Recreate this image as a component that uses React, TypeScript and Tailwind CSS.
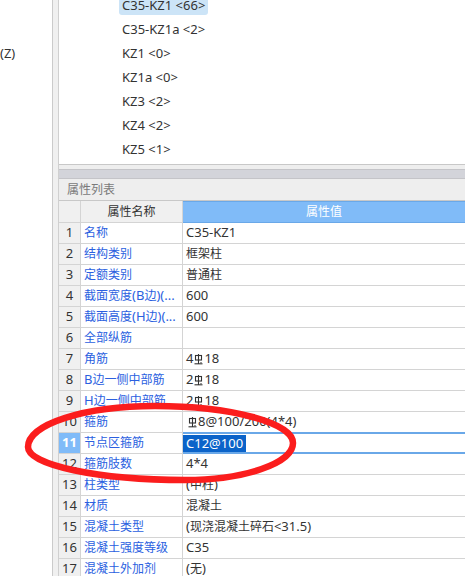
import React from "react";

function Rebar() {
  return (
    <svg width="9" height="11" viewBox="0 0 9 11" className="inline-block mx-[1px] align-[-1px]">
      <rect x="1.5" y="1.5" width="6" height="4.5" fill="none" stroke="#333" strokeWidth="1.1" />
      <line x1="4.5" y1="0" x2="4.5" y2="10" stroke="#333" strokeWidth="1.1" />
      <line x1="0.5" y1="9.8" x2="8.5" y2="9.8" stroke="#333" strokeWidth="1.1" />
      <line x1="6.5" y1="8" x2="7.5" y2="9" stroke="#333" strokeWidth="1" />
    </svg>
  );
}

function T({ s }: { s: string }) {
  const parts = s.split(/([\u3400-\u9fff]+|#)/);
  return (
    <>
      {parts.map((p, i) =>
        p === "#" ? (
          <Rebar key={i} />
        ) : /[\u3400-\u9fff]/.test(p) ? (
          <span key={i} className="text-[12px]">
            {p}
          </span>
        ) : (
          <React.Fragment key={i}>{p}</React.Fragment>
        )
      )}
    </>
  );
}

const tree = ["C35-KZ1 <66>", "C35-KZ1a <2>", "KZ1 <0>", "KZ1a <0>", "KZ3 <2>", "KZ4 <2>", "KZ5 <1>"];

const rows: [string, string][] = [
  ["名称", "C35-KZ1"],
  ["结构类别", "框架柱"],
  ["定额类别", "普通柱"],
  ["截面宽度(B边)(...", "600"],
  ["截面高度(H边)(...", "600"],
  ["全部纵筋", ""],
  ["角筋", "4#18"],
  ["B边一侧中部筋", "2#18"],
  ["H边一侧中部筋", "2#18"],
  ["箍筋", "#8@100/200(4*4)"],
  ["节点区箍筋", "C12@100"],
  ["箍筋肢数", "4*4"],
  ["柱类型", "(中柱)"],
  ["材质", "混凝土"],
  ["混凝土类型", "(现浇混凝土碎石<31.5)"],
  ["混凝土强度等级", "C35"],
  ["混凝土外加剂", "(无)"],
];

export default function App() {
  return (
    <div className="relative w-[465px] h-[576px] overflow-hidden bg-white flex font-['Noto_Sans','Noto_Sans_CJK_SC',sans-serif] text-[13px] text-[#333]">
      <div className="w-[53px] shrink-0 border-r border-[#cbcbcb] bg-white">
        <div className="mt-[44px] leading-[18px]">(Z)</div>
      </div>
      <div className="w-[5px] shrink-0 bg-[#f0f0f0]" />
      <div className="flex-1 min-w-0 flex flex-col border-l border-[#d0d0d0]">
        <div className="h-[165px] shrink-0 border-b border-[#c8c8c8] overflow-hidden bg-white">
          <div className="-mt-[7px] pl-[60px]">
            {tree.map((t, i) => (
              <div key={t} className="h-[24px] flex items-center">
                <span
                  className={
                    i === 0
                      ? "h-[20px] leading-[20px] px-[3px] rounded-[3px] bg-[#cce4f7] whitespace-pre"
                      : "h-[20px] leading-[20px] px-[3px] whitespace-pre"
                  }
                >
                  {t}
                </span>
              </div>
            ))}
          </div>
        </div>
        <div className="h-[4px] shrink-0 bg-[#eeeeee]" />
        <div className="h-[10px] shrink-0 bg-[#d3d4da] border-y border-[#c4c4c8]" />
        <div className="h-[22px] shrink-0 bg-[#eeeeee] border-b border-[#c8c8c8] pl-[8px] flex items-center text-[#7a7a7a]">
          <T s="属性列表" />
        </div>
        <div className="h-[22px] shrink-0 flex">
          <div className="w-[22px] shrink-0 bg-[#f0f0f0] border-r border-b border-[#d4d4d4]" />
          <div className="w-[102px] shrink-0 bg-[#f0f0f0] border-r border-b border-[#d4d4d4] flex items-center justify-center">
            <T s="属性名称" />
          </div>
          <div className="flex-1 bg-[#80bbf8] border-b border-[#6aa8e8] shadow-[inset_0_1px_0_#6aa8e8] flex items-center justify-center text-white">
            <T s="属性值" />
          </div>
        </div>
        {rows.map(([n, v], i) => {
          const idx = i + 1;
          const sel = idx === 11;
          return (
            <div key={idx} className="h-[21px] shrink-0 flex">
              <div
                className={
                  sel
                    ? "w-[22px] shrink-0 bg-[#80bbf8] border-r border-b border-[#d4d4d4] flex items-center justify-center text-white font-bold"
                    : "w-[22px] shrink-0 bg-[#f0f0f0] border-r border-b border-[#d4d4d4] flex items-center justify-center"
                }
              >
                {idx}
              </div>
              <div className="w-[102px] shrink-0 border-r border-b border-[#d4d4d4] flex items-center pl-[3px] text-[#2b5fdf] whitespace-nowrap overflow-hidden">
                <T s={n} />
              </div>
              {sel ? (
                <div className="flex-1 min-w-0 border-b border-[#6aa8e8] shadow-[inset_0_1px_0_#6aa8e8,inset_0_-1px_0_#6aa8e8] flex items-center">
                  <span className="h-[17px] leading-[17px] px-[3px] bg-[#0b63c9] text-white">{v}</span>
                </div>
              ) : (
                <div
                  className={
                    idx === 10
                      ? "flex-1 min-w-0 border-b border-[#6aa8e8] flex items-center pl-[4px] whitespace-nowrap"
                      : "flex-1 min-w-0 border-b border-[#d4d4d4] flex items-center pl-[3px] whitespace-nowrap"
                  }
                >
                  <T s={v} />
                </div>
              )}
            </div>
          );
        })}
      </div>
      <svg className="absolute left-0 top-0 pointer-events-none" width="465" height="576" viewBox="0 0 465 576">
        <path
          d="M28,447 C28,424 85,406 155,406 C231,406 293,423 293,443 C293,463 245,480 185,480 C98,480 28,465 28,447 Z"
          fill="none"
          stroke="#fb1d1d"
          strokeWidth="6.5"
        />
      </svg>
    </div>
  );
}
